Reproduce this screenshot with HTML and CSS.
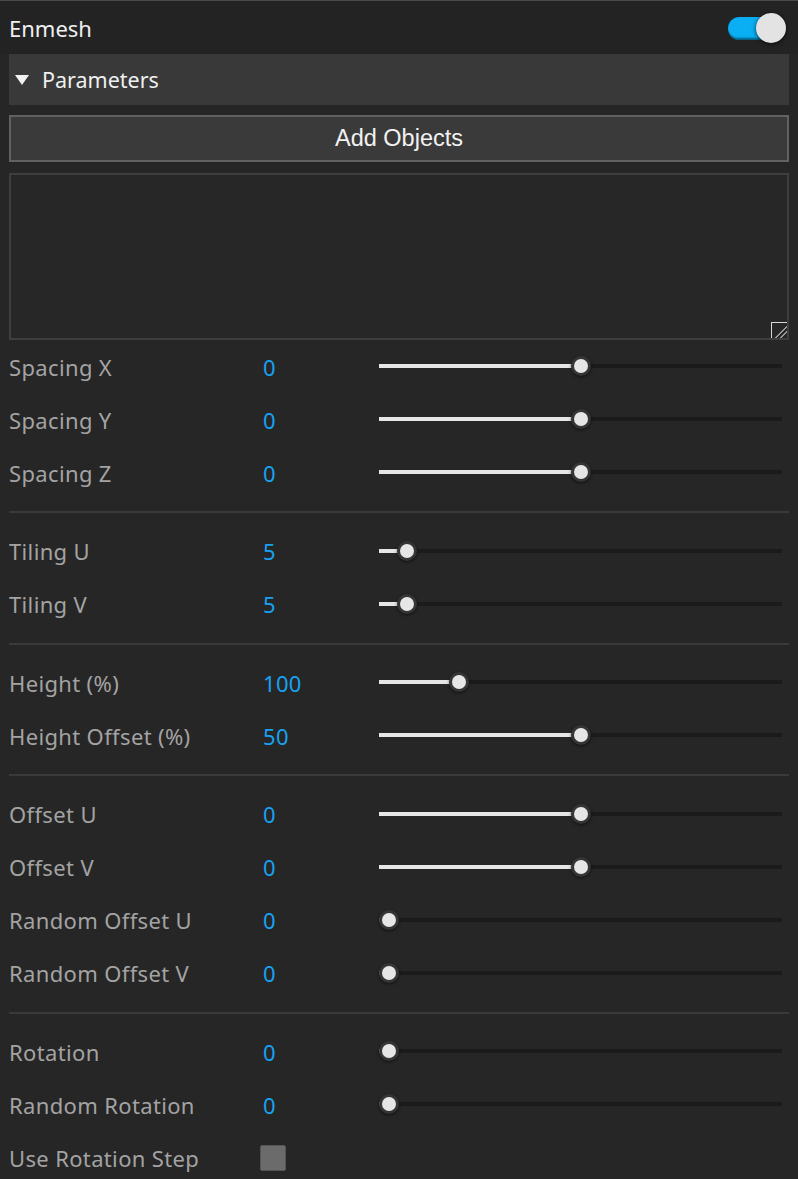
FILE: index.html
```html
<!DOCTYPE html>
<html lang="en">
<head>
    <meta charset="UTF-8">
    <meta name="viewport" content="width=device-width, initial-scale=1.0">
    <title>Enmesh</title>
    <link rel="stylesheet" href="styles.css">
</head>
<body>
    <div class="panel">
        <!-- header with on/off switch -->
        <div class="head">
            <span class="head-title">Enmesh</span>
            <span class="switch"><span class="switch-knob"></span></span>
        </div>

        <div class="body">
            <div class="section-bar">
                <span class="caret"></span>
                <span>Parameters</span>
            </div>

            <button class="add-btn">Add Objects</button>

            <div class="objects">
                <span class="grip"></span>
            </div>

            <!-- spacing -->
            <div class="group">
                <div class="row">
                    <span class="label">Spacing X</span>
                    <span class="value">0</span>
                    <div class="track"><div class="fill" style="width:201.5px"><span class="thumb"></span></div></div>
                </div>
                <div class="row">
                    <span class="label">Spacing Y</span>
                    <span class="value">0</span>
                    <div class="track"><div class="fill" style="width:201.5px"><span class="thumb"></span></div></div>
                </div>
                <div class="row">
                    <span class="label">Spacing Z</span>
                    <span class="value">0</span>
                    <div class="track"><div class="fill" style="width:201.5px"><span class="thumb"></span></div></div>
                </div>
            </div>

            <div class="sep"></div>

            <!-- tiling -->
            <div class="group">
                <div class="row">
                    <span class="label">Tiling U</span>
                    <span class="value">5</span>
                    <div class="track"><div class="fill" style="width:28px"><span class="thumb"></span></div></div>
                </div>
                <div class="row">
                    <span class="label">Tiling V</span>
                    <span class="value">5</span>
                    <div class="track"><div class="fill" style="width:28px"><span class="thumb"></span></div></div>
                </div>
            </div>

            <div class="sep"></div>

            <!-- height -->
            <div class="group">
                <div class="row">
                    <span class="label">Height (%)</span>
                    <span class="value">100</span>
                    <div class="track"><div class="fill" style="width:80px"><span class="thumb"></span></div></div>
                </div>
                <div class="row">
                    <span class="label">Height Offset (%)</span>
                    <span class="value">50</span>
                    <div class="track"><div class="fill" style="width:201.5px"><span class="thumb"></span></div></div>
                </div>
            </div>

            <div class="sep"></div>

            <!-- offset -->
            <div class="group">
                <div class="row">
                    <span class="label">Offset U</span>
                    <span class="value">0</span>
                    <div class="track"><div class="fill" style="width:201.5px"><span class="thumb"></span></div></div>
                </div>
                <div class="row">
                    <span class="label">Offset V</span>
                    <span class="value">0</span>
                    <div class="track"><div class="fill" style="width:201.5px"><span class="thumb"></span></div></div>
                </div>
                <div class="row">
                    <span class="label">Random Offset U</span>
                    <span class="value">0</span>
                    <div class="track"><div class="fill" style="width:10px"><span class="thumb"></span></div></div>
                </div>
                <div class="row">
                    <span class="label">Random Offset V</span>
                    <span class="value">0</span>
                    <div class="track"><div class="fill" style="width:10px"><span class="thumb"></span></div></div>
                </div>
            </div>

            <div class="sep"></div>

            <!-- rotation -->
            <div class="group">
                <div class="row">
                    <span class="label">Rotation</span>
                    <span class="value">0</span>
                    <div class="track"><div class="fill" style="width:10px"><span class="thumb"></span></div></div>
                </div>
                <div class="row">
                    <span class="label">Random Rotation</span>
                    <span class="value">0</span>
                    <div class="track"><div class="fill" style="width:10px"><span class="thumb"></span></div></div>
                </div>
                <div class="row">
                    <span class="label">Use Rotation Step</span>
                    <span class="check"></span>
                </div>
            </div>
        </div>
    </div>
</body>
</html>
```

FILE: styles.css
```css
*{
    margin:0;
    padding:0;
    box-sizing:border-box;
}
body{
    background:#262626;
    font-family:"Noto Sans","Open Sans",sans-serif;
    overflow:hidden;
}
.panel{
    width:798px;
    height:1179px;
    border-top:1px solid #4a4a4a;
}

/* header */
.head{
    height:53px;
    background:#232323;
    display:flex;
    align-items:center;
    justify-content:space-between;
    padding:0 10px 0 9px;
}
.head-title{
    color:#f0f0f0;
    font-size:22px;
}
.switch{
    position:relative;
    width:48px;
    height:23px;
    margin-top:2px;
    margin-right:12px;
    border-radius:12px;
    background:#0aaef2;
    box-shadow:inset -1px -2px 2px rgba(0,0,0,.45);
}
.switch-knob{
    position:absolute;
    left:28px;
    top:-4px;
    width:30px;
    height:30px;
    border-radius:50%;
    background:#e3e3e3;
    box-shadow:0 1px 4px rgba(0,0,0,.7);
}

.body{
    padding:0 9px;
}

/* collapsible header */
.section-bar{
    height:51px;
    background:#393939;
    display:flex;
    align-items:center;
    gap:13px;
    padding-left:6px;
    color:#f0f0f0;
    font-size:21.5px;
}
.caret{
    width:0;
    height:0;
    border-left:7.5px solid transparent;
    border-right:7.5px solid transparent;
    border-top:10px solid #f2f2f2;
}

.add-btn{
    display:block;
    width:100%;
    height:47px;
    margin-top:10px;
    background:#3a3a3a;
    border:2px solid #616161;
    color:#f2f2f2;
    font-family:"Liberation Sans",Arial,sans-serif;
    font-size:23.5px;
}

.objects{
    position:relative;
    height:167px;
    margin-top:11px;
    border:2px solid #3e3e3e;
    background:#272727;
}
.grip{
    position:absolute;
    right:0;
    bottom:0;
    width:16px;
    height:16px;
    border-left:1px solid #d8d8d8;
    border-top:1px solid #d8d8d8;
    background:
        linear-gradient(135deg, transparent 58%, #9a9a9a 58%, #9a9a9a 64%, transparent 64%, transparent 76%, #9a9a9a 76%, #9a9a9a 82%, transparent 82%);
}

/* slider rows */
.row{
    display:grid;
    grid-template-columns:254px 116px 403px;
    align-items:center;
    height:53px;
    font-size:22px;
}
.label{
    color:#a3a3a3;
    letter-spacing:0.35px;
}
.value{
    color:#17a2f3;
    letter-spacing:0.3px;
}
.track{
    height:4px;
    margin-top:-1px;
    background:#1b1b1b;
}
.fill{
    position:relative;
    height:4px;
    background:#e6e6e6;
}
.thumb{
    position:absolute;
    right:-10px;
    top:-8px;
    width:20px;
    height:20px;
    border-radius:50%;
    background:#e6e6e6;
    border:3px solid #353535;
    box-shadow:0 1px 3px rgba(0,0,0,.6);
}
.check{
    width:26px;
    height:26px;
    margin-left:-3px;
    border-radius:2px;
    background:#6b6b6b;
    border:1px solid #555;
}

.sep{
    height:2px;
    margin:12px 0 11.5px;
    background:#3a3a3a;
}
```
